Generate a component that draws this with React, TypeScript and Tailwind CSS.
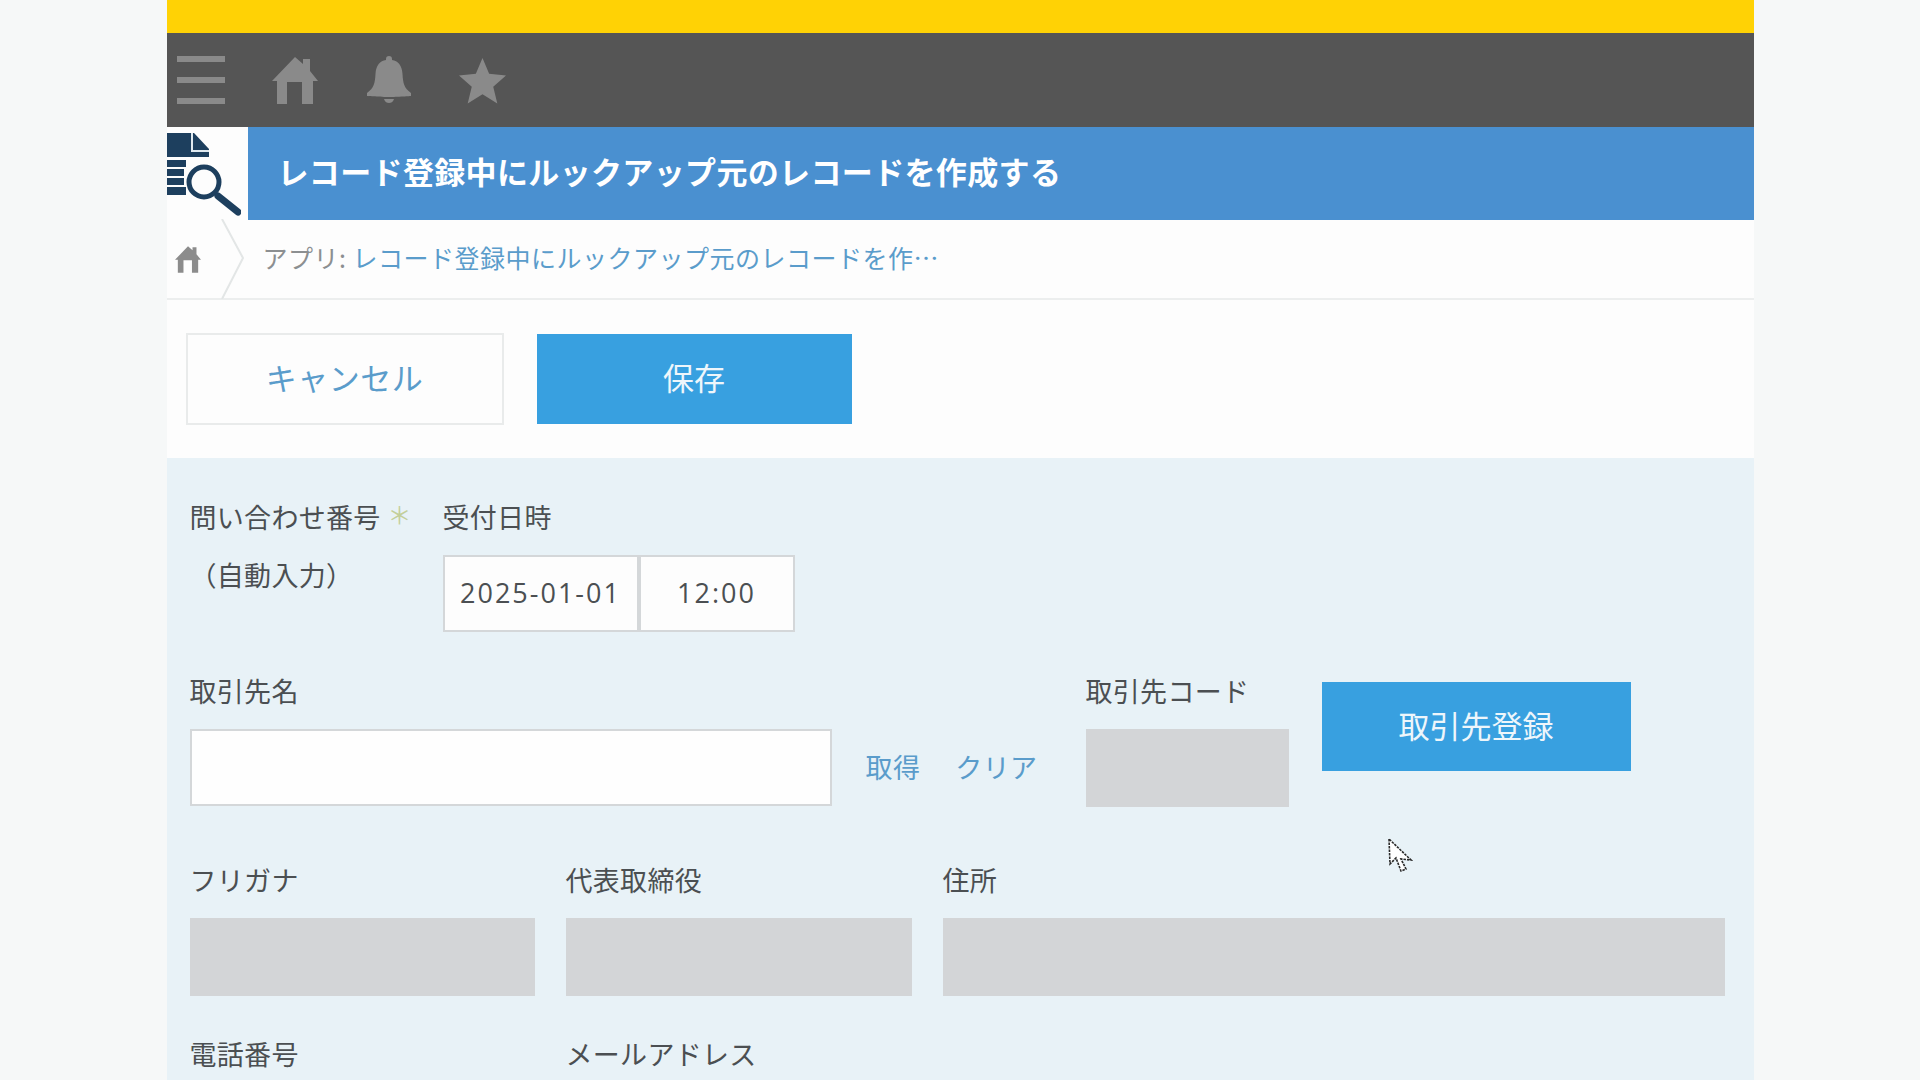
import React from 'react';

const Label = ({ children }: { children: React.ReactNode }) => (
  <div className="h-[34px] leading-[34px] text-[27px] tracking-[0.3px] text-[#4b4f52] whitespace-nowrap">{children}</div>
);

const Disabled = ({ className }: { className: string }) => (
  <div className={`h-[78px] bg-[#d3d5d7] ${className}`} />
);

const HomeIcon = ({ className }: { className: string }) => (
  <svg viewBox="0 0 46 47" className={className} fill="currentColor">
    <path d="M23 0 L31 7 V2 H38 V14 L46 24 H41 V47 H30 V25 H15 V47 H5 V24 H0 Z" />
  </svg>
);

const App = () => {
  return (
    <div className="h-screen overflow-hidden bg-[#f6f8f8] font-['Noto_Sans_CJK_JP',sans-serif]">
      <div className="w-[1587px] mx-auto bg-[#fdfdfd]">
        {/* top bars */}
        <div className="h-[33px] bg-[#ffd205]" />
        <div className="h-[94px] bg-[#555555] flex items-center pl-[10px] text-[#8a8a8a]">
          <div className="w-[48px] flex flex-col gap-[15px]">
            <div className="h-[6px] bg-current" />
            <div className="h-[6px] bg-current" />
            <div className="h-[6px] bg-current" />
          </div>
          <HomeIcon className="w-[46px] h-[47px] ml-[47px]" />
          <svg viewBox="0 0 44 48" className="w-[44px] h-[48px] ml-[49px]" fill="currentColor">
            <path d="M22 0 C24 0 25 1 25 3 V4 C31 5 35 9 35.5 18 C36 27 37 32 44 37 V40 C44 40 30 41 22 41 C14 41 0 40 0 40 V37 C7 32 8 27 8.5 18 C9 9 13 5 19 4 V3 C19 1 20 0 22 0 Z" />
            <path d="M17 43 H27 C26 46 24 47 22 47 C20 47 18 46 17 43 Z" />
          </svg>
          <svg viewBox="0 0 46 46" className="w-[47px] h-[47px] ml-[48px]" fill="currentColor">
            <path d="M23 1 L29.5 16.5 L46 18 L33.5 29 L37.5 45.5 L23 36.5 L8.5 45.5 L12.5 29 L0 18 L16.5 16.5 Z" />
          </svg>
        </div>

        {/* app title */}
        <div className="h-[93px] flex">
          <div className="w-[81px] shrink-0 pt-[5px]">
            <svg viewBox="0 0 74 84" className="w-[74px] h-[84px]">
              <path d="M0 1 H27 L42 17 V25 H0 Z" fill="#1d3f5e" />
              <path d="M25 1 V19 H42" fill="none" stroke="#dfe9ef" strokeWidth="2" />
              <path d="M0 28 H19 V35 H0 Z M0 37 H17 V44 H0 Z M0 46 H17 V53 H0 Z M0 55 H19 V63 H0 Z" fill="#1d3f5e" />
              <circle cx="37" cy="50" r="15" fill="none" stroke="#1d3f5e" strokeWidth="5" />
              <path d="M51 64 L71 80" stroke="#1d3f5e" strokeWidth="7" strokeLinecap="round" />
            </svg>
          </div>
          <div className="flex-1 bg-[#4a90d0] flex items-center pl-[30px] pb-[4px] text-white text-[31px] font-bold tracking-[0.35px] whitespace-nowrap">
            レコード登録中にルックアップ元のレコードを作成する
          </div>
        </div>

        {/* breadcrumb */}
        <div className="h-[80px] flex items-center border-b-2 border-[#eceeee]">
          <HomeIcon className="w-[26px] h-[27px] ml-[8px] text-[#8c8c8c]" />
          <svg viewBox="0 0 24 80" className="w-[24px] h-[80px] ml-[20px] shrink-0" fill="none" stroke="#e3e6e6" strokeWidth="2">
            <path d="M1 0 L22 39 L1 80" />
          </svg>
          <div className="ml-[18px] pb-[3px] text-[25px] tracking-[0.5px] whitespace-nowrap">
            <span className="text-[#8c8f91]">アプリ: </span>
            <span className="text-[#5a9ccb]">レコード登録中にルックアップ元のレコードを作…</span>
          </div>
        </div>

        {/* toolbar */}
        <div className="h-[158px] flex items-start pt-[33px] pl-[19px] gap-[33px]">
          <div className="w-[318px] h-[92px] pb-[3px] border-2 border-[#e9ebeb] flex items-center justify-center text-[31px] tracking-[0.5px] text-[#5a9ccb]">
            キャンセル
          </div>
          <div className="w-[315px] h-[90px] pb-[3px] mt-[1px] bg-[#38a0e0] flex items-center justify-center text-[31px] text-[#eef6fb]">
            保存
          </div>
        </div>

        {/* form */}
        <div className="h-[622px] bg-[#e8f2f7] pl-[23px] pr-[29px] pt-[42px]">
          <div className="flex">
            <div className="w-[253px]">
              <div className="flex items-center">
                <Label>問い合わせ番号</Label>
                <span className="ml-[7px] -mt-[6px] text-[24px] leading-[30px] text-[#c3cf9a]">＊</span>
              </div>
              <div className="mt-[24px]">
                <Label>（自動入力）</Label>
              </div>
            </div>
            <div>
              <Label>受付日時</Label>
              <div className="mt-[21px] flex text-[27px] tracking-[2px] text-[#4b4f52] font-['Open_Sans',sans-serif]">
                <div className="w-[196px] h-[77px] bg-[#fdfdfd] border-2 border-[#d4d7d9] flex items-center justify-center">2025-01-01</div>
                <div className="w-[156px] h-[77px] bg-[#fdfdfd] border-2 border-[#d4d7d9] flex items-center justify-center">12:00</div>
              </div>
            </div>
          </div>

          <div className="flex items-start mt-[42px]">
            <div className="w-[642px]">
              <Label>取引先名</Label>
              <div className="mt-[21px] h-[77px] bg-[#fefefe] border-2 border-[#d4d7d9]" />
            </div>
            <div className="mt-[55px] h-[77px] flex items-center text-[27px] tracking-[0.4px] text-[#5a9ccb]">
              <span className="ml-[34px]">取得</span>
              <span className="ml-[35px]">クリア</span>
            </div>
            <div className="ml-[48px] w-[203px]">
              <Label>取引先コード</Label>
              <div className="mt-[21px]"><Disabled className="w-full" /></div>
            </div>
            <div className="ml-[33px] mt-[8px] w-[309px] h-[89px] pb-[3px] bg-[#38a0e0] flex items-center justify-center text-[31px] text-[#eef6fb]">
              取引先登録
            </div>
          </div>

          <div className="flex gap-[31px] mt-[56px]">
            <div className="w-[345px]">
              <Label>フリガナ</Label>
              <div className="mt-[21px]"><Disabled className="w-full" /></div>
            </div>
            <div className="w-[346px]">
              <Label>代表取締役</Label>
              <div className="mt-[21px]"><Disabled className="w-full" /></div>
            </div>
            <div className="flex-1">
              <Label>住所</Label>
              <div className="mt-[21px]"><Disabled className="w-full" /></div>
            </div>
          </div>

          <div className="flex gap-[31px] mt-[41px]">
            <div className="w-[345px]"><Label>電話番号</Label></div>
            <div className="w-[346px]"><Label>メールアドレス</Label></div>
          </div>
        </div>
      </div>

      {/* mouse pointer */}
      <svg viewBox="0 0 25 36" className="absolute left-[1388px] top-[838px] w-[25px] h-[36px]">
        <path d="M1 1 L2 26 L8 20 L13 33 L18 31 L13 21 L23 22 Z" fill="#ffffff" stroke="#2a2a2a" strokeWidth="1.6" strokeDasharray="2.5 1" />
      </svg>
    </div>
  );
};

export default App;
